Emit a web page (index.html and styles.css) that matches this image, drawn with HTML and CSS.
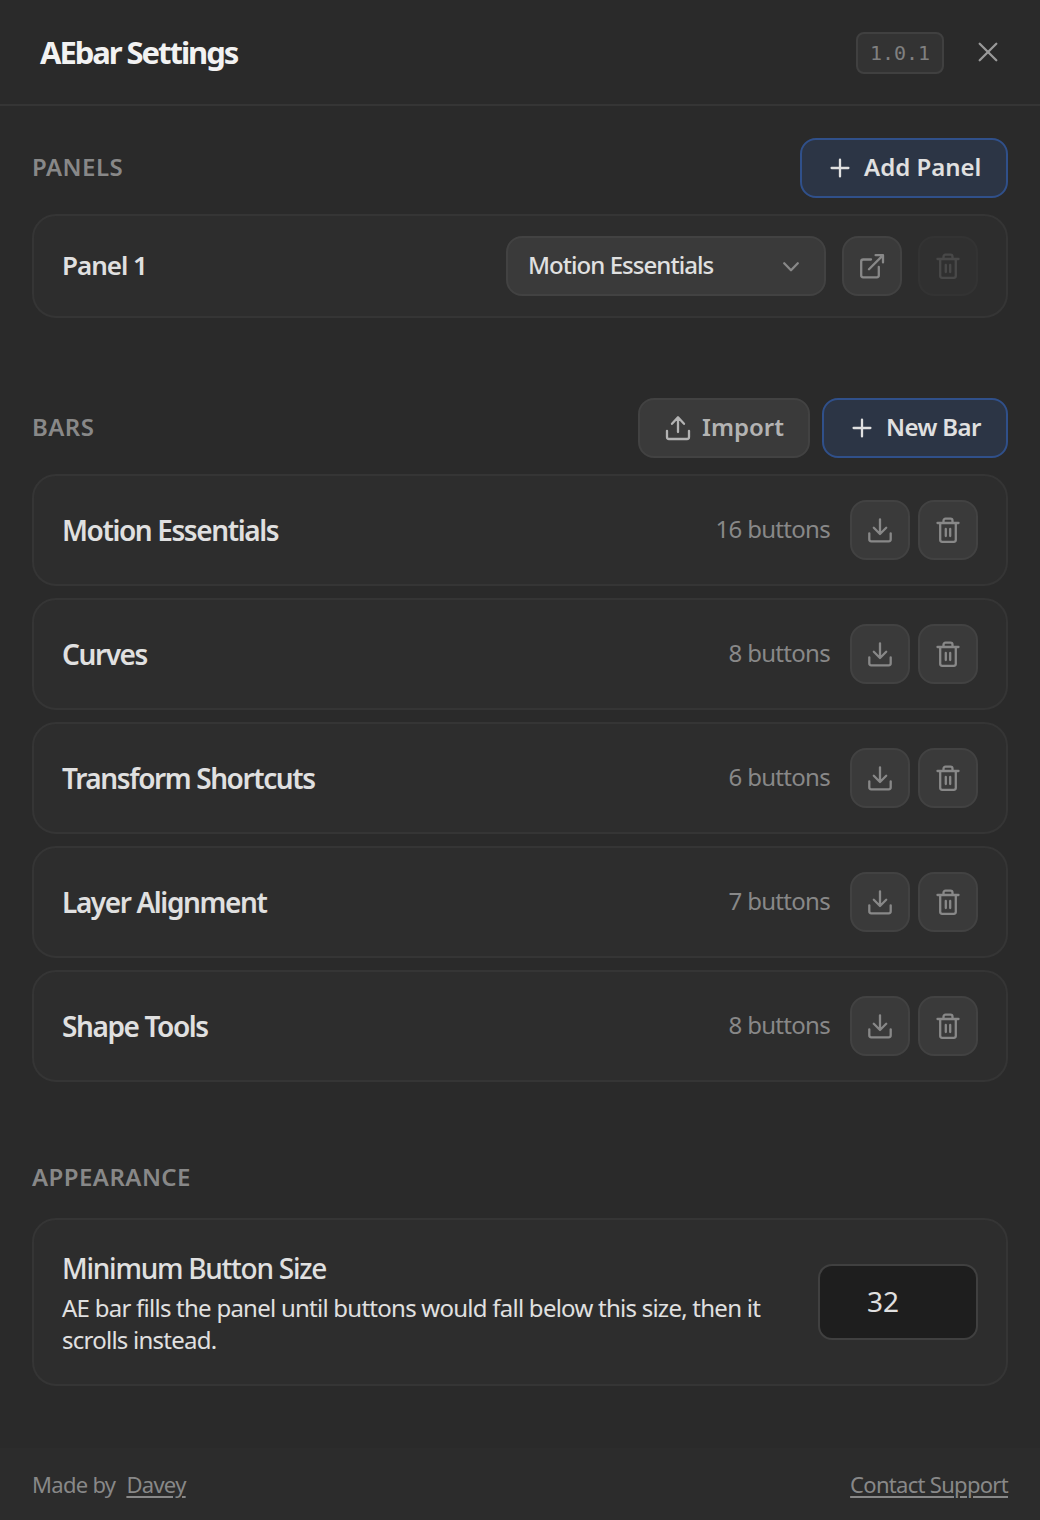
FILE: index.html
```
<!DOCTYPE html>
<html lang="en">
<head>
    <meta charset="UTF-8">
    <meta name="viewport" content="width=device-width, initial-scale=1.0">
    <title>AEbar Settings</title>
    <link rel="stylesheet" href="styles.css">
</head>
<body>
    <!-- Shared icons -->
    <svg class="sprite" aria-hidden="true">
        <symbol id="plus" viewBox="0 0 28 28"><path d="M14 5.6v16.8M5.6 14h16.8"/></symbol>
        <symbol id="close" viewBox="0 0 28 28"><path d="M5.7 5.7l16.6 16.6M22.3 5.7L5.7 22.3"/></symbol>
        <symbol id="chevron" viewBox="0 0 28 28"><path d="M7.2 11.3l6.8 7 6.8-7"/></symbol>
        <symbol id="external" viewBox="0 0 28 28"><path d="M13 7.5H5.2a2 2 0 0 0-2 2v13.8a2 2 0 0 0 2 2h13.6a2 2 0 0 0 2-2V15M11 17.2L24.8 3.4M17.6 3.2H25v7.2"/></symbol>
        <symbol id="trash" viewBox="0 0 28 28"><path d="M3.5 7h21M6.2 7v16.8a2 2 0 0 0 2 2h11.6a2 2 0 0 0 2-2V7M9.5 7V4.7a2 2 0 0 1 2-2h5a2 2 0 0 1 2 2V7M11.8 13v7M16.2 13v7"/></symbol>
        <symbol id="download" viewBox="0 0 28 28"><path d="M3.3 17.3v6a2 2 0 0 0 2 2h17.4a2 2 0 0 0 2-2v-6M14 3.3V18M7.8 11.8L14 18l6.2-6.2"/></symbol>
        <symbol id="upload" viewBox="0 0 28 28"><path d="M3 16.8V23a2 2 0 0 0 2 2h18a2 2 0 0 0 2-2v-6.2M14 3.3V18M8 9.8l6-6.5 6 6.5"/></symbol>
    </svg>

    <header class="header">
        <h1>AEbar Settings</h1>
        <span class="version">1.0.1</span>
        <button class="close-btn" aria-label="Close"><svg class="icon"><use href="#close"/></svg></button>
    </header>

    <main>
        <section>
            <div class="section-head">
                <h2>PANELS</h2>
                <button class="btn primary add-panel"><svg class="icon"><use href="#plus"/></svg><span>Add Panel</span></button>
            </div>
            <div class="card panel-card">
                <span class="panel-name">Panel 1</span>
                <button class="select"><span>Motion Essentials</span><svg class="icon"><use href="#chevron"/></svg></button>
                <button class="icon-btn" aria-label="Open panel"><svg class="icon"><use href="#external"/></svg></button>
                <button class="icon-btn" aria-label="Delete panel" disabled><svg class="icon"><use href="#trash"/></svg></button>
            </div>
        </section>

        <section>
            <div class="section-head">
                <h2>BARS</h2>
                <button class="btn import"><svg class="icon"><use href="#upload"/></svg><span>Import</span></button>
                <button class="btn primary new-bar"><svg class="icon"><use href="#plus"/></svg><span>New Bar</span></button>
            </div>
            <div class="bar-list">
                <div class="card bar">
                    <span class="bar-name">Motion Essentials</span>
                    <span class="count">16 buttons</span>
                    <button class="icon-btn" aria-label="Export"><svg class="icon"><use href="#download"/></svg></button>
                    <button class="icon-btn" aria-label="Delete"><svg class="icon"><use href="#trash"/></svg></button>
                </div>
                <div class="card bar">
                    <span class="bar-name">Curves</span>
                    <span class="count">8 buttons</span>
                    <button class="icon-btn" aria-label="Export"><svg class="icon"><use href="#download"/></svg></button>
                    <button class="icon-btn" aria-label="Delete"><svg class="icon"><use href="#trash"/></svg></button>
                </div>
                <div class="card bar">
                    <span class="bar-name">Transform Shortcuts</span>
                    <span class="count">6 buttons</span>
                    <button class="icon-btn" aria-label="Export"><svg class="icon"><use href="#download"/></svg></button>
                    <button class="icon-btn" aria-label="Delete"><svg class="icon"><use href="#trash"/></svg></button>
                </div>
                <div class="card bar">
                    <span class="bar-name">Layer Alignment</span>
                    <span class="count">7 buttons</span>
                    <button class="icon-btn" aria-label="Export"><svg class="icon"><use href="#download"/></svg></button>
                    <button class="icon-btn" aria-label="Delete"><svg class="icon"><use href="#trash"/></svg></button>
                </div>
                <div class="card bar">
                    <span class="bar-name">Shape Tools</span>
                    <span class="count">8 buttons</span>
                    <button class="icon-btn" aria-label="Export"><svg class="icon"><use href="#download"/></svg></button>
                    <button class="icon-btn" aria-label="Delete"><svg class="icon"><use href="#trash"/></svg></button>
                </div>
            </div>
        </section>

        <section>
            <div class="section-head appearance-head">
                <h2>APPEARANCE</h2>
            </div>
            <div class="card setting">
                <div class="setting-text">
                    <h3>Minimum Button Size</h3>
                    <p>AE bar fills the panel until buttons would fall below this size, then it<br>scrolls instead.</p>
                </div>
                <input class="size-input" type="text" value="32" aria-label="Minimum button size">
            </div>
        </section>
    </main>

    <footer>
        <span>Made by <a class="author" href="#">Davey</a></span>
        <a class="support" href="#">Contact Support</a>
    </footer>
</body>
</html>
```
FILE: styles.css
```
* { box-sizing: border-box; margin: 0; padding: 0; }

body {
    font-family: "Noto Sans", sans-serif;
    background: #2a2a2a;
    color: #e0e0e0;
    height: 1520px;
    display: flex;
    flex-direction: column;
    overflow: hidden;
}
button, input { font-family: inherit; color: inherit; }
button { cursor: pointer; white-space: nowrap; }

.sprite { display: none; }
.icon {
    width: 28px; height: 28px; flex: none;
    fill: none; stroke: currentColor; stroke-width: 2.3;
    stroke-linecap: round; stroke-linejoin: round;
}

/* Header */
.header {
    display: flex; align-items: center; flex: none;
    height: 106px; padding: 0 38px 0 40px;
    border-bottom: 2px solid #353535;
}
h1 {
    flex: 1; font-size: 31px; font-weight: 700;
    color: #f2f2f2; letter-spacing: -2.05px;
}
.version {
    width: 88px; height: 42px; line-height: 38px; margin-top: 2px;
    border: 2px solid #404040; border-radius: 8px;
    background: #333; color: #808080; text-align: center;
    font-family: "DejaVu Sans Mono", monospace; font-size: 20px;
}
.close-btn {
    display: flex; margin-left: 30px;
    border: none; background: none; color: #999;
}

/* Sections */
main { flex: 1; min-height: 0; padding: 32px 32px 0; }
section { margin-bottom: 80px; }
.section-head {
    display: flex; align-items: center; gap: 12px;
    height: 60px; margin-bottom: 16px;
}
.appearance-head { height: 32px; margin-bottom: 24px; }
h2 {
    flex: 1; padding-bottom: 3px; font-size: 24px; font-weight: 600;
    color: #888; letter-spacing: 0.45px;
}
.card {
    display: flex; align-items: center;
    background: #2d2d2d; border: 2px solid #353535;
    border-radius: 24px; padding: 0 28px;
}

/* Buttons */
.btn {
    display: flex; align-items: center; height: 60px;
    border: 2px solid #424242; border-radius: 16px;
    background: #3a3a3a; color: #b3b3b3;
    font-size: 24px; font-weight: 600;
}
.btn span, .select span { padding-bottom: 3px; }
.primary { background: #2c3545; border-color: #30508a; color: #e0e0e0; }
.add-panel { width: 208px; padding-left: 24px; gap: 10px; }
.new-bar { width: 186px; padding-left: 24px; gap: 10px; letter-spacing: -0.6px; }
.import { width: 172px; padding-left: 24px; gap: 10px; }
.icon-btn {
    display: flex; align-items: center; justify-content: center;
    width: 60px; height: 60px; flex: none;
    background: #3a3a3a; border: 2px solid #424242;
    border-radius: 16px; color: #888;
}
.icon-btn:disabled { opacity: 0.3; cursor: default; }

/* Panels */
.panel-card { height: 104px; gap: 16px; }
.panel-name { flex: 1; padding-bottom: 2px; font-size: 26px; font-weight: 600; letter-spacing: -1px; }
.select {
    display: flex; align-items: center; justify-content: space-between;
    width: 320px; height: 60px; padding: 0 19px 0 20px;
    background: #3a3a3a; border: 2px solid #424242; border-radius: 16px;
    font-size: 24px; font-weight: 500; letter-spacing: -0.95px;
}
.select .icon { color: #888; }

/* Bars */
.bar-list { display: flex; flex-direction: column; gap: 12px; }
.bar { height: 112px; gap: 8px; }
.bar-name { flex: 1; font-size: 28px; font-weight: 600; letter-spacing: -1.4px; }
.count { margin-right: 12px; padding-bottom: 3px; font-size: 24px; color: #888; letter-spacing: -0.7px; }

/* Appearance */
.setting { height: 168px; }
.setting-text { flex: 1; padding-top: 2px; white-space: nowrap; }
h3 { font-size: 28px; line-height: 36px; font-weight: 500; letter-spacing: -1.25px; }
p { margin-top: 6px; font-size: 24px; line-height: 32px; letter-spacing: -0.75px; }
.size-input {
    width: 160px; height: 76px; padding: 0 30px 2px 0;
    background: #1e1e1e; border: 2px solid #404040; border-radius: 14px;
    font-size: 28px; text-align: center;
}

/* Footer */
footer {
    display: flex; justify-content: space-between; align-items: center; flex: none;
    height: 72px; padding: 0 32px;
    background: #2c2c2c; color: #888;
    font-size: 22px; letter-spacing: -0.7px;
}
footer a { color: inherit; text-underline-offset: 3px; text-decoration-thickness: 2px; }
.author { margin-left: 6px; }
```
